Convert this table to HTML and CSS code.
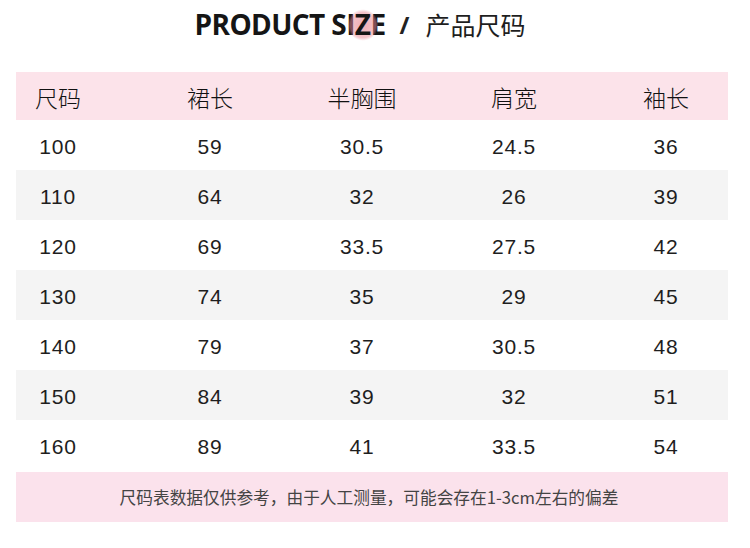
FILE: index.html
```html
<!DOCTYPE html>
<html lang="zh">
<head>
<meta charset="utf-8">
<title>Product Size</title>
<link rel="stylesheet" href="styles.css">
</head>
<body>
<div class="page">
  <div class="title">
    <span class="title-en">PRODUCT SI<span class="dot">Z</span>E</span>
    <span class="slash">/</span>
    <span class="title-cn">产品尺码</span>
  </div>
  <div class="table">
    <div class="row head">
      <div class="cell first">尺码</div><div class="cell">裙长</div><div class="cell">半胸围</div><div class="cell">肩宽</div><div class="cell last">袖长</div>
    </div>
    <div class="row">
      <div class="cell first">100</div><div class="cell">59</div><div class="cell">30.5</div><div class="cell">24.5</div><div class="cell last">36</div>
    </div>
    <div class="row alt">
      <div class="cell first">110</div><div class="cell">64</div><div class="cell">32</div><div class="cell">26</div><div class="cell last">39</div>
    </div>
    <div class="row">
      <div class="cell first">120</div><div class="cell">69</div><div class="cell">33.5</div><div class="cell">27.5</div><div class="cell last">42</div>
    </div>
    <div class="row alt">
      <div class="cell first">130</div><div class="cell">74</div><div class="cell">35</div><div class="cell">29</div><div class="cell last">45</div>
    </div>
    <div class="row">
      <div class="cell first">140</div><div class="cell">79</div><div class="cell">37</div><div class="cell">30.5</div><div class="cell last">48</div>
    </div>
    <div class="row alt">
      <div class="cell first">150</div><div class="cell">84</div><div class="cell">39</div><div class="cell">32</div><div class="cell last">51</div>
    </div>
    <div class="row">
      <div class="cell first">160</div><div class="cell">89</div><div class="cell">41</div><div class="cell">33.5</div><div class="cell last">54</div>
    </div>
    <div class="note">尺码表数据仅供参考，由于人工测量，可能会存在1-3cm左右的偏差</div>
  </div>
</div>
</body>
</html>
```
FILE: styles.css
```css
html, body {
  margin: 0;
  padding: 0;
  background: #ffffff;
}
.page {
  width: 750px;
  height: 548px;
  display: flex;
  flex-direction: column;
  font-family: "Liberation Sans", "Noto Sans CJK SC", sans-serif;
  color: #1e1e1e;
}
.title {
  height: 48px;
  display: flex;
  align-items: center;
  justify-content: center;
  padding-right: 30px;
}
.title-en {
  font-family: "Open Sans", "Noto Sans", sans-serif;
  font-weight: 700;
  font-size: 28px;
  letter-spacing: -0.6px;
  color: #151515;
}
.dot {
  position: relative;
  z-index: 0;
}
.dot::before {
  content: "";
  position: absolute;
  left: 50%;
  top: 50%;
  width: 30px;
  height: 32px;
  margin-left: -15px;
  margin-top: -15px;
  border-radius: 50%;
  background: radial-gradient(circle, rgba(228, 120, 132, 0.6) 0%, rgba(232, 135, 148, 0.5) 58%, rgba(240, 170, 180, 0) 72%);
  z-index: -1;
}
.slash {
  font-family: "Open Sans", sans-serif;
  font-weight: 700;
  font-size: 24px;
  margin: 0 16px 0 14px;
  color: #222;
}
.title-cn {
  font-family: "Noto Sans CJK SC", sans-serif;
  font-size: 25px;
  color: #1e1e1e;
}
.table {
  margin: 24px 22px 0 16px;
  display: flex;
  flex-direction: column;
}
.row {
  display: grid;
  grid-template-columns: 118px 152px 152px 152px 1fr;
  height: 50px;
  padding-top: 4px;
  box-sizing: border-box;
  align-items: center;
  font-size: 21px;
  letter-spacing: 0.8px;
}
.row.head {
  height: 48px;
  padding-top: 2px;
  background: #fce3ea;
  font-family: "Noto Sans CJK SC", sans-serif;
  font-weight: 300;
  font-size: 23px;
  letter-spacing: 0;
  color: #111;
}
.row.alt {
  background: #f4f4f4;
}
.cell {
  text-align: center;
}
.cell.first {
  padding-right: 34px;
}
.cell.last {
  padding-left: 14px;
}
.note {
  margin-top: 2px;
  height: 50px;
  display: flex;
  align-items: center;
  justify-content: center;
  background: #fbe2ec;
  font-family: "Noto Sans CJK SC", sans-serif;
  font-size: 16.7px;
  color: #444;
  padding-right: 6px;
}
```
